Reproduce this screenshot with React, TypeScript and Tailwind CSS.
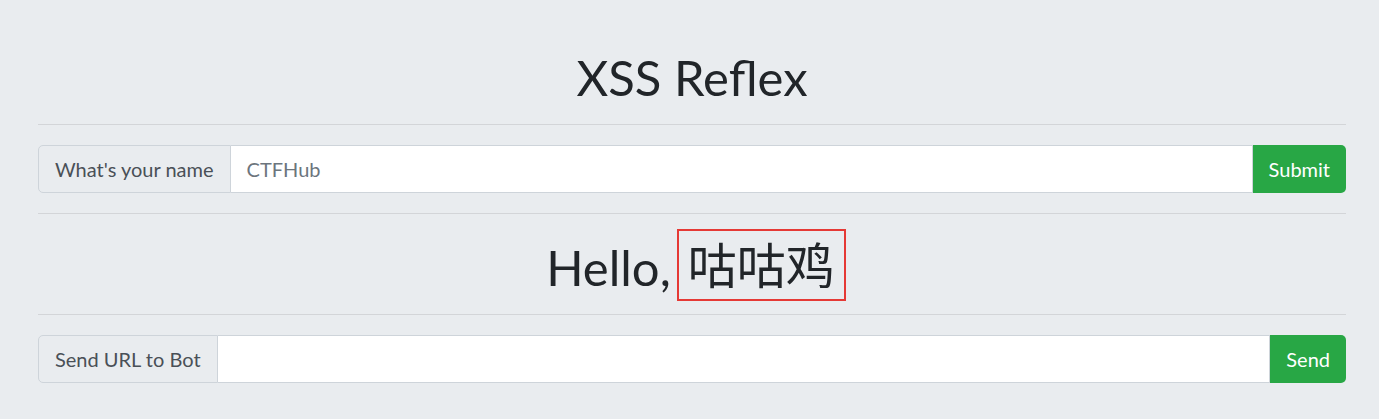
import React from "react";

const font = { fontFamily: 'Lato, "Noto Sans CJK SC", sans-serif' };

function Group({ label, placeholder, button }: { label: string; placeholder?: string; button: string }) {
	return (
		<div className="flex h-[48px] text-[20px]">
			<span className="flex items-center px-4 bg-[#e9ecef] text-[#495057] border border-[#ced4da] rounded-l-[5px] whitespace-nowrap">
				{label}
			</span>
			<input
				className="flex-1 min-w-0 px-4 bg-white border border-l-0 border-[#ced4da] text-[#495057] placeholder:text-[#6c757d] outline-none"
				placeholder={placeholder}
			/>
			<button className="px-4 bg-[#28a745] text-white rounded-r-[5px]">{button}</button>
		</div>
	);
}

export default function App() {
	return (
		<div className="min-h-screen bg-[#e9ecef] text-[#212529]" style={font}>
			<div className="ml-[38px] w-[1308px] pt-[44px] flex flex-col">
				{/* TITLE */}
				<h1 className="h-[67px] leading-[67px] text-[49px] text-center">XSS Reflex</h1>
				<div className="mt-[13px] h-px bg-[#d3d5d8]" />

				<div className="mt-[20px]">
					<Group label="What's your name" placeholder="CTFHub" button="Submit" />
				</div>
				<div className="mt-[20px] h-px bg-[#d3d5d8]" />

				{/* GREETING */}
				<div className="mt-[20px] h-[67px] pl-[8px] flex items-center justify-center text-[49px] leading-none">
					<span>Hello,</span>
					<span className="ml-[6px] mb-[5px] inline-flex items-center justify-center w-[169px] h-[72px] border-2 border-[#e53935] whitespace-nowrap">
						咕咕鸡
					</span>
				</div>
				<div className="mt-[13px] h-px bg-[#d3d5d8]" />

				<div className="mt-[20px]">
					<Group label="Send URL to Bot" button="Send" />
				</div>
			</div>
		</div>
	);
}
